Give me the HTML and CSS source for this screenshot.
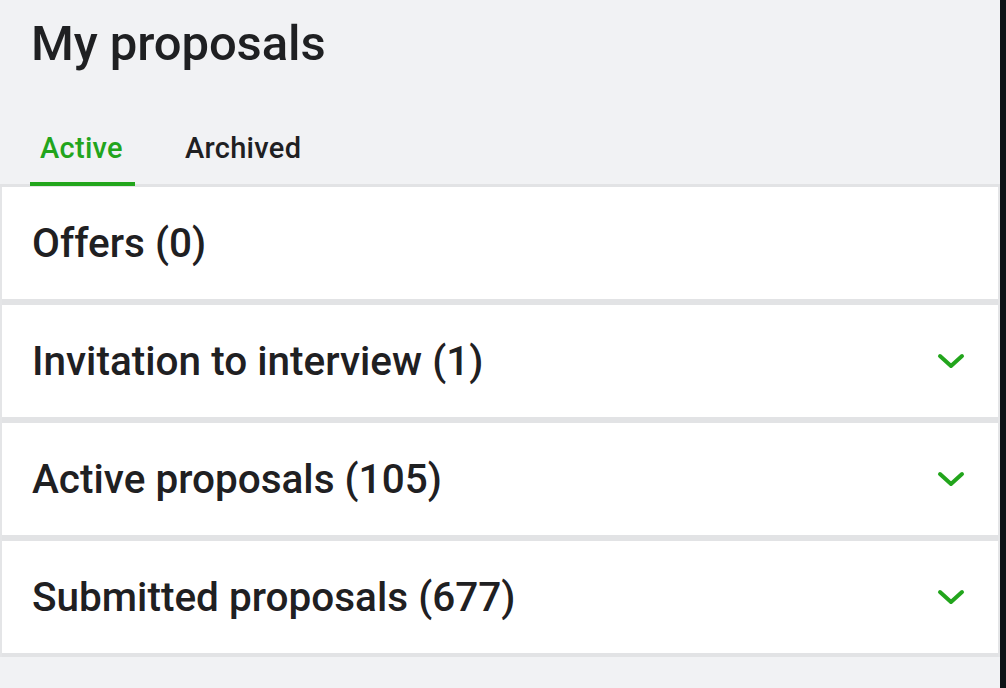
FILE: index.html
```html
<!DOCTYPE html>
<html lang="en">
<head>
<meta charset="utf-8">
<title>My proposals</title>
<link rel="stylesheet" href="styles.css">
</head>
<body>
<div class="page">
  <main class="main">
    <header class="header">
      <h1 class="title">My proposals</h1>
    </header>
    <nav class="tabs">
      <a class="tab tab-active">Active</a>
      <a class="tab">Archived</a>
    </nav>
    <section class="list">
      <div class="row"><span class="row-label">Offers (0)</span></div>
      <div class="row"><span class="row-label">Invitation to interview (1)</span><svg class="chev" viewBox="0 0 28 16"><path d="M3 3 L14 13 L25 3" /></svg></div>
      <div class="row"><span class="row-label">Active proposals (105)</span><svg class="chev" viewBox="0 0 28 16"><path d="M3 3 L14 13 L25 3" /></svg></div>
      <div class="row"><span class="row-label">Submitted proposals (677)</span><svg class="chev" viewBox="0 0 28 16"><path d="M3 3 L14 13 L25 3" /></svg></div>
    </section>
  </main>
  <div class="edge"></div>
</div>
</body>
</html>
```

FILE: styles.css
```css
* { box-sizing: border-box; }
html, body { margin: 0; padding: 0; }
body {
  background: #f1f2f4;
  font-family: Roboto, "Liberation Sans", Arial, sans-serif;
  color: #1f2022;
}
.page {
  display: flex;
  min-height: 688px;
}
.main {
  flex: 1;
  display: flex;
  flex-direction: column;
}
.edge {
  width: 6px;
  background: #0e1216;
}
.header {
  padding: 14px 0 0 31px;
  height: 120px;
}
.title {
  margin: 0;
  font-size: 49px;
  font-weight: 500;
  line-height: 60px;
  letter-spacing: -0.1px;
}
.tabs {
  display: flex;
  gap: 40px;
  padding-left: 30px;
  height: 67px;
  border-bottom: 3px solid #e2e3e5;
}
.tab {
  font-size: 29px;
  font-weight: 500;
  padding: 10px 12px 0 10px;
  line-height: 36px;
  color: #1f2022;
  height: 66px;
  letter-spacing: 0.3px;
}
.tab-active {
  color: #22a51c;
  border-bottom: 4px solid #22a51c;
}
.list {
  display: flex;
  flex-direction: column;
  border-left: 2px solid #e4e5e7;
  border-right: 2px solid #e4e5e7;
}
.row {
  display: flex;
  align-items: center;
  justify-content: space-between;
  height: 118px;
  background: #ffffff;
  border-bottom: 6px solid #e2e3e5;
  padding: 0 33px 0 30px;
}
.row:last-child {
  height: 116px;
  border-bottom-width: 4px;
}
.row-label {
  font-size: 40.5px;
  font-weight: 500;
  letter-spacing: 0;
}
.chev {
  width: 28px;
  height: 16px;
  fill: none;
  stroke: #22a51c;
  stroke-width: 4;
  stroke-linecap: round;
  stroke-linejoin: round;
}
```
